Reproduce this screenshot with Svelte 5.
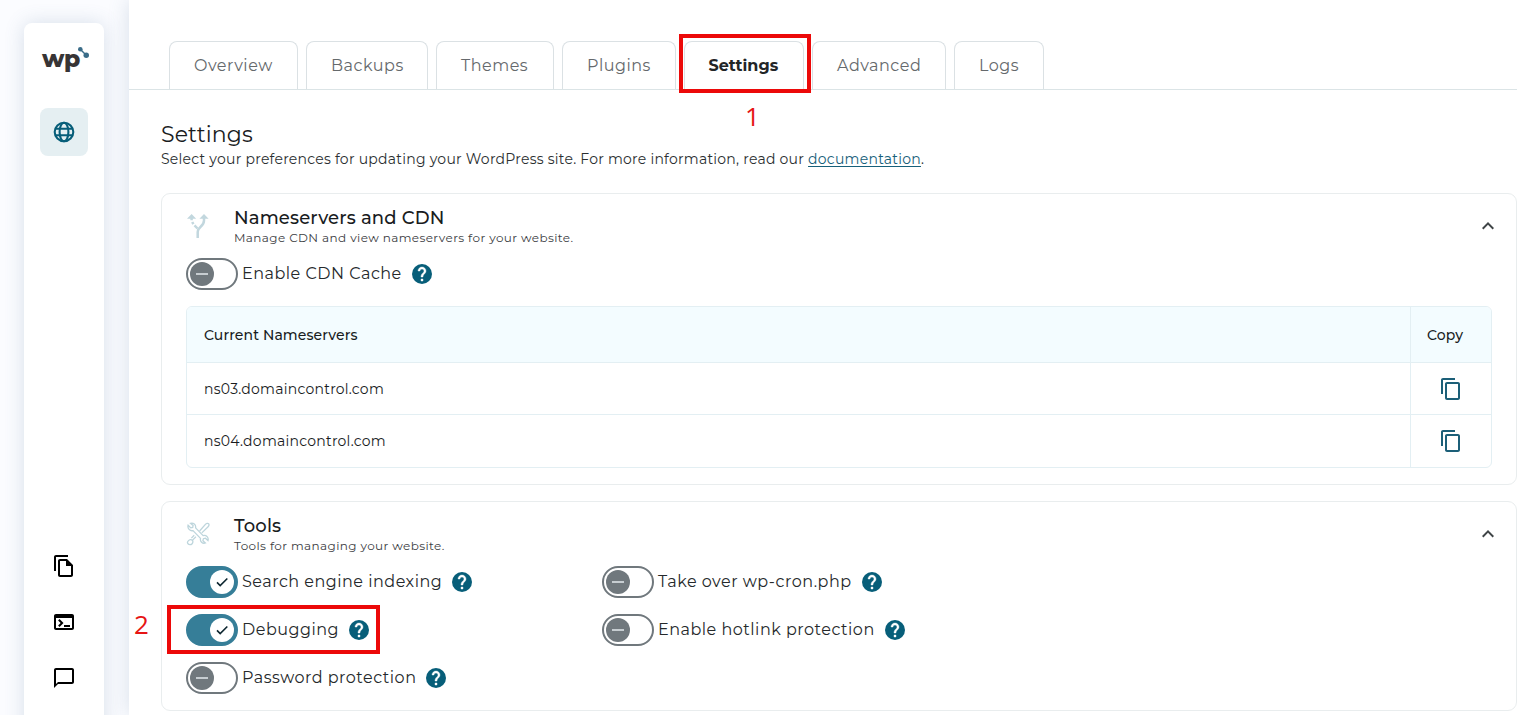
<script lang="ts">
  type Setting = { label: string; on: boolean };

  const tabs = [
    { label: 'Overview', width: 129 },
    { label: 'Backups', width: 122 },
    { label: 'Themes', width: 118 },
    { label: 'Plugins', width: 114 },
    { label: 'Settings', width: 120 },
    { label: 'Advanced', width: 134 },
    { label: 'Logs', width: 90 }
  ];

  const cdn: Setting = { label: 'Enable CDN Cache', on: false };

  const tools: Setting[] = [
    { label: 'Search engine indexing', on: true },
    { label: 'Take over wp-cron.php', on: false },
    { label: 'Debugging', on: true },
    { label: 'Enable hotlink protection', on: false },
    { label: 'Password protection', on: false }
  ];

  const nameservers = ['ns03.domaincontrol.com', 'ns04.domaincontrol.com'];

  let active = $state('Settings');
</script>

{#snippet setting(item: Setting)}
  <div class="setting">
    <button class="switch" class:on={item.on} role="switch" aria-checked={item.on} aria-label={item.label}>
      <span class="thumb">
        <svg viewBox="0 0 24 24" aria-hidden="true">
          {#if item.on}
            <path d="M4.5 12.6l4.8 4.8L20 6.8" />
          {:else}
            <path d="M3 12h18" />
          {/if}
        </svg>
      </span>
    </button>
    <span class="setting-label">{item.label}</span>
    <svg class="help" viewBox="2 2 20 20" aria-hidden="true">
      <circle cx="12" cy="12" r="10" />
      <path d="M13 19h-2v-2h2v2zm2.07-7.75l-.9.92C13.45 12.9 13 13.5 13 15h-2v-.5c0-1.1.45-2.1 1.17-2.83l1.24-1.26c.37-.36.59-.86.59-1.41 0-1.1-.9-2-2-2s-2 .9-2 2H8c0-2.21 1.79-4 4-4s4 1.79 4 4c0 .88-.36 1.68-.93 2.25z" />
    </svg>
  </div>
{/snippet}

{#snippet chevron()}
  <svg class="chevron" viewBox="0 0 24 24" aria-hidden="true">
    <path d="M12 8l-6 6 1.41 1.41L12 10.83l4.59 4.58L18 14z" />
  </svg>
{/snippet}

<div class="app">
  <aside class="rail">
    <nav class="rail-card">
      <div class="logo">
        <span>wp</span>
        <svg viewBox="0 0 10 10" aria-hidden="true">
          <path d="M2 2l6 6" />
          <circle cx="2.1" cy="2.1" r="2.1" />
          <circle cx="7.5" cy="7.5" r="2.5" />
        </svg>
      </div>

      <button class="rail-btn selected" aria-label="Sites">
        <svg viewBox="0 0 24 24">
          <g fill="none" stroke="currentColor" stroke-width="2.1">
            <circle cx="12" cy="12" r="9.3" />
            <ellipse cx="12" cy="12" rx="4.4" ry="9.3" />
            <path d="M3.4 8.8h17.2M3.4 15.2h17.2" />
          </g>
        </svg>
      </button>

      <div class="rail-bottom">
        <button class="rail-btn" aria-label="Files">
          <svg viewBox="0 0 24 24">
            <path d="M16 1H4c-1.1 0-2 .9-2 2v14h2V3h12V1zm-1 4H8c-1.1 0-1.99.9-1.99 2L6 21c0 1.1.89 2 1.99 2H19c1.1 0 2-.9 2-2V11l-6-6zM8 21V7h6v5h5v9H8z" />
          </svg>
        </button>
        <button class="rail-btn" aria-label="Terminal">
          <svg viewBox="0 0 24 24">
            <path d="M20 4H4c-1.11 0-2 .9-2 2v12c0 1.1.89 2 2 2h16c1.1 0 2-.9 2-2V6c0-1.1-.89-2-2-2zm0 14H4V8h16v10zm-2-1h-6v-2h6v2zM7.5 17l-1.41-1.41L8.67 13l-2.59-2.59L7.5 9l4 4-4 4z" />
          </svg>
        </button>
        <button class="rail-btn" aria-label="Feedback">
          <svg viewBox="0 0 24 24">
            <path d="M20 2H4c-1.1 0-2 .9-2 2v18l4-4h14c1.1 0 2-.9 2-2V4c0-1.1-.9-2-2-2zm0 14H6l-2 2V4h16v12z" />
          </svg>
        </button>
      </div>
    </nav>
  </aside>

  <main class="main">
    <div class="tabs" role="tablist">
      {#each tabs as tab (tab.label)}
        <button
          class="tab"
          class:active={tab.label === active}
          role="tab"
          aria-selected={tab.label === active}
          style:width="{tab.width}px"
          onclick={() => (active = tab.label)}
        >
          {tab.label}
        </button>
      {/each}
    </div>

    <div class="content">
      <h1>Settings</h1>
      <p class="intro">
        Select your preferences for updating your WordPress site. For more information, read our <a href="#docs">documentation</a>.
      </p>

      <section class="panel">
        <header class="panel-head">
          <svg class="panel-icon fork" viewBox="0 0 24 24" aria-hidden="true">
            <path class="heads" d="M5.6 0L1 4.8h9.200zM18 0l-4.600 4.800h9.200z" />
            <path d="M18 4v2.500c0 6.500-6.300 6-6.300 11.500v6" />
            <path d="M5.600 4v2.200M6.200 8l1.200 2.200M8.500 11.400l3 3.100" />
          </svg>
          <div class="panel-text">
            <h2>Nameservers and CDN</h2>
            <p>Manage CDN and view nameservers for your website.</p>
          </div>
          {@render chevron()}
        </header>

        {@render setting(cdn)}

        <div class="table">
          <div class="row head">
            <div class="cell">Current Nameservers</div>
            <div class="cell copy">Copy</div>
          </div>
          {#each nameservers as ns (ns)}
            <div class="row">
              <div class="cell">{ns}</div>
              <div class="cell copy">
                <button class="copy-btn" aria-label="Copy {ns}">
                  <svg viewBox="0 0 24 24">
                    <path d="M16 1H4c-1.1 0-2 .9-2 2v14h2V3h12V1zm3 4H8c-1.1 0-2 .9-2 2v14c0 1.1.9 2 2 2h11c1.1 0 2-.9 2-2V7c0-1.1-.9-2-2-2zm0 16H8V7h11v14z" />
                  </svg>
                </button>
              </div>
            </div>
          {/each}
        </div>
      </section>

      <section class="panel">
        <header class="panel-head">
          <svg class="panel-icon line" viewBox="0 0 24 24" aria-hidden="true">
            <path d="M2.1 3.2l2.7 2.7 1.9-.4.4-1.9-2.600-2.300c2.800-.8 5.700 1.200 5.100 4.600l7.500 7.700c3.300-.8 5.800 2 4.900 5l-2.600-2.400-2 .5-.5 2 2.500 2.300c-3 1-5.600-1.700-4.900-4.600L7 8.600C4 9.300 1.200 6.400 2.100 3.200z" />
            <path d="M13.600 9l5.800-6.600c1-1.100 2.500-1.300 3.200-.6s.5 2-.5 2.900l-6.300 6.200M9.900 14.800l-3.100 3.100M8.200 13.200L5.400 16.100M2 21.800c-.9-1-.4-2.300.5-3.200s2.700-1.500 3.800-.4.500 2.900-.4 3.800-2.900.9-3.900-.2z" />
          </svg>
          <div class="panel-text">
            <h2>Tools</h2>
            <p>Tools for managing your website.</p>
          </div>
          {@render chevron()}
        </header>

        <div class="settings-grid">
          {#each tools as tool (tool.label)}
            {@render setting(tool)}
          {/each}
        </div>
      </section>
    </div>
  </main>

  <!-- step callouts drawn over the page -->
  <div class="mark mark-tab"></div>
  <span class="step step-one">1</span>
  <div class="mark mark-debug"></div>
  <span class="step step-two">2</span>
</div>

<style>
  :global(body) {
    margin: 0;
    overflow: hidden;
  }

  .app {
    position: relative;
    display: flex;
    width: 100%;
    height: 715px;
    overflow: hidden;
    background: #fbfcff;
    font-family: Montserrat, Inter, 'Open Sans', sans-serif;
    color: #191c1e;
  }

  h1,
  h2,
  p {
    margin: 0;
    font-weight: 400;
  }

  button {
    padding: 0;
    border: none;
    background: none;
    font: inherit;
    color: inherit;
    cursor: pointer;
  }

  .rail {
    flex: none;
    box-sizing: border-box;
    width: 129px;
    padding: 23px 0 0 24px;
  }

  .rail-card {
    box-sizing: border-box;
    display: flex;
    flex-direction: column;
    align-items: center;
    width: 80px;
    height: 720px;
    padding: 24px 0 41px;
    border-radius: 8px;
    background: #fff;
    box-shadow: 0 0 20px rgba(70, 105, 145, 0.2);
  }

  .logo {
    display: flex;
    align-items: flex-start;
    width: 44px;
    height: 61px;
    color: #373435;
    font-size: 23.5px;
    font-weight: 800;
    line-height: 24px;
    letter-spacing: -0.5px;
  }

  .logo svg {
    flex: none;
    width: 11px;
    height: 11px;
    margin-left: -2px;
    fill: #3a6c88;
    stroke: #3a6c88;
    stroke-width: 1.3;
  }

  .logo circle {
    stroke: none;
  }

  .rail-btn {
    display: grid;
    place-items: center;
    width: 48px;
    height: 48px;
    border-radius: 8px;
    color: #000;
  }

  .rail-btn.selected {
    background: #e5eff2;
    color: #075e79;
  }

  .rail-btn svg {
    width: 24px;
    height: 24px;
    fill: currentColor;
  }

  .rail-bottom {
    display: flex;
    flex-direction: column;
    gap: 8px;
    margin-top: auto;
  }

  .main {
    flex: 1;
    min-width: 0;
    background: #fff;
    box-shadow: 0 0 20px rgba(70, 105, 145, 0.2);
  }

  .tabs {
    box-sizing: border-box;
    display: flex;
    gap: 8px;
    height: 90px;
    padding: 41px 0 0 40px;
    border-bottom: 1px solid #dbe4e6;
  }

  .tab {
    flex: none;
    box-sizing: border-box;
    height: 48px;
    padding: 0 0 1px 24px;
    border: 1px solid #dbe1e4;
    border-bottom: none;
    border-radius: 8px 8px 0 0;
    color: #65696c;
    font-size: 16px;
    letter-spacing: 0.5px;
    text-align: left;
    white-space: nowrap;
  }

  .tab.active {
    padding-left: 23.5px;
    color: #222527;
    font-weight: 700;
    letter-spacing: 0;
  }

  .content {
    padding: 32px 0 0 32px;
  }

  h1 {
    font-size: 22px;
    line-height: 26px;
    letter-spacing: 0.1px;
  }

  .intro {
    margin-bottom: 23px;
    font-size: 14px;
    line-height: 22px;
    letter-spacing: 0.25px;
    white-space: nowrap;
    color: #2b2f31;
  }

  .intro a {
    color: #17607a;
    text-underline-offset: 2px;
  }

  .panel {
    margin-bottom: 16px;
    padding: 8px 24px 16px;
    border: 1px solid #e9edee;
    border-radius: 9px;
  }

  .panel-head {
    display: flex;
    align-items: center;
    height: 48px;
    margin-bottom: 8px;
  }

  .panel-icon {
    flex: none;
    width: 24px;
    height: 24px;
    margin-right: 24px;
    fill: none;
  }

  .panel-icon.fork {
    stroke: #c2d7de;
    stroke-width: 2.5;
  }

  .fork .heads {
    fill: #c2d7de;
    stroke: none;
  }

  .panel-icon.line {
    stroke: #bdd5dc;
    stroke-width: 1.3;
  }

  .panel-text {
    flex: 1;
    padding-top: 2px;
    white-space: nowrap;
  }

  h2 {
    font-size: 18px;
    font-weight: 500;
    line-height: 22px;
    letter-spacing: 0.15px;
  }

  .panel-text p {
    font-size: 12px;
    line-height: 18px;
    letter-spacing: 0.4px;
    color: #3c4043;
  }

  .chevron {
    flex: none;
    width: 24px;
    height: 24px;
    margin-right: -8px;
    fill: #3f4446;
  }

  .setting {
    display: flex;
    align-items: center;
    height: 32px;
    white-space: nowrap;
  }

  .switch {
    box-sizing: border-box;
    display: flex;
    align-items: center;
    flex: none;
    width: 52px;
    height: 32px;
    padding: 0 2px;
    border: 2px solid #70787d;
    border-radius: 16px;
  }

  .switch.on {
    justify-content: flex-end;
    border-color: #367e98;
    background: #367e98;
  }

  .thumb {
    display: grid;
    place-items: center;
    width: 24px;
    height: 24px;
    border-radius: 50%;
    background: #70787d;
  }

  .on .thumb {
    background: #fff;
  }

  .thumb svg {
    width: 16px;
    height: 16px;
    fill: none;
    stroke: #dce3e6;
    stroke-width: 2.4;
  }

  .on .thumb svg {
    stroke: #0d2630;
  }

  .setting-label {
    margin: 0 10px 1px 4px;
    font-size: 16px;
    letter-spacing: 0.5px;
    color: #25292b;
  }

  .help {
    flex: none;
    width: 20px;
    height: 20px;
    fill: #fff;
    stroke: #fff;
    stroke-width: 0.4;
  }

  .help circle {
    fill: #075e79;
    stroke: none;
  }

  .table {
    margin-top: 16px;
    border: 1px solid #e3eff3;
    border-radius: 6px;
    overflow: hidden;
    font-size: 14px;
    letter-spacing: 0.25px;
  }

  .row {
    box-sizing: border-box;
    display: flex;
    height: 52px;
  }

  .row + .row {
    border-top: 1px solid #e3eff3;
  }

  .row.head {
    height: 55px;
    background: #f3fcff;
    font-weight: 500;
    letter-spacing: 0.1px;
  }

  .row:last-child {
    height: 53px;
  }

  .cell {
    box-sizing: border-box;
    display: flex;
    align-items: center;
    flex: 1;
    padding-left: 17px;
  }

  .cell.copy {
    flex: none;
    width: 81px;
    padding: 0 0 0 16px;
    border-left: 1px solid #e3eff3;
  }

  .copy-btn {
    display: grid;
    place-items: center;
    width: 48px;
    height: 40px;
    color: #1c5f78;
  }

  .copy-btn svg {
    width: 24px;
    height: 24px;
    fill: currentColor;
  }

  .settings-grid {
    display: grid;
    grid-template-columns: 416px 416px;
    row-gap: 16px;
  }

  .mark {
    position: absolute;
    box-sizing: border-box;
    border: 4px solid #ec0909;
    pointer-events: none;
  }

  .mark-tab {
    left: 679px;
    top: 34px;
    width: 132px;
    height: 59px;
  }

  .mark-debug {
    left: 167px;
    top: 605px;
    width: 213px;
    height: 49px;
  }

  .step {
    position: absolute;
    color: #e61414;
    font-family: 'Segoe UI', 'Open Sans', 'Noto Sans', sans-serif;
    font-size: 26px;
    line-height: 30px;
  }

  .step-one {
    left: 745px;
    top: 101px;
  }

  .step-two {
    left: 134px;
    top: 609px;
  }
</style>
